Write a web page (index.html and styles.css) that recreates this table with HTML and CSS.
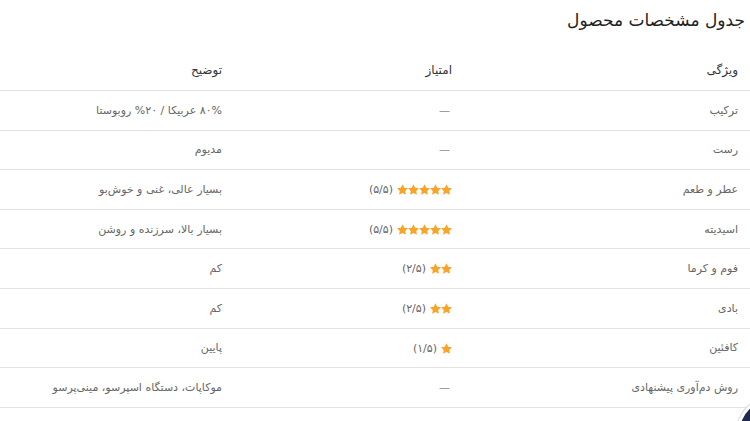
FILE: index.html
```html
<!DOCTYPE html>
<html lang="fa" dir="rtl">
<head>
<meta charset="utf-8">
<link rel="stylesheet" href="styles.css">
</head>
<body>
<svg width="0" height="0" class="defs" aria-hidden="true">
  <defs>
    <symbol id="star" viewBox="1.5 1.3 21 20.5">
      <path d="M12 1.5l3.2 6.6 7.3 1.05-5.3 5.15 1.25 7.25L12 18.1l-6.45 3.45 1.25-7.25L1.5 9.15l7.3-1.05z"/>
    </symbol>
  </defs>
</svg>
<div class="page">
  <h2 class="title">جدول مشخصات محصول</h2>
  <table class="spec">
    <thead>
      <tr><th class="c1">ویژگی</th><th class="c2">امتیاز</th><th class="c3">توضیح</th></tr>
    </thead>
    <tbody>
      <tr><td>ترکیب</td><td><span class="dash">—</span></td><td>۸۰% عربیکا / ۲۰% روبوستا</td></tr>
      <tr><td>رست</td><td><span class="dash">—</span></td><td>مدیوم</td></tr>
      <tr><td>عطر و طعم</td><td><span class="rate"><span class="stars"><svg class="st"><use href="#star"/></svg><svg class="st"><use href="#star"/></svg><svg class="st"><use href="#star"/></svg><svg class="st"><use href="#star"/></svg><svg class="st"><use href="#star"/></svg></span><span class="score">(۵/۵)</span></span></td><td>بسیار عالی، غنی و خوش‌بو</td></tr>
      <tr><td>اسیدیته</td><td><span class="rate"><span class="stars"><svg class="st"><use href="#star"/></svg><svg class="st"><use href="#star"/></svg><svg class="st"><use href="#star"/></svg><svg class="st"><use href="#star"/></svg><svg class="st"><use href="#star"/></svg></span><span class="score">(۵/۵)</span></span></td><td>بسیار بالا، سرزنده و روشن</td></tr>
      <tr><td>فوم و کرما</td><td><span class="rate"><span class="stars"><svg class="st"><use href="#star"/></svg><svg class="st"><use href="#star"/></svg></span><span class="score">(۲/۵)</span></span></td><td>کم</td></tr>
      <tr><td>بادی</td><td><span class="rate"><span class="stars"><svg class="st"><use href="#star"/></svg><svg class="st"><use href="#star"/></svg></span><span class="score">(۲/۵)</span></span></td><td>کم</td></tr>
      <tr><td>کافئین</td><td><span class="rate"><span class="stars"><svg class="st"><use href="#star"/></svg></span><span class="score">(۱/۵)</span></span></td><td>پایین</td></tr>
      <tr><td>روش دم‌آوری پیشنهادی</td><td><span class="dash">—</span></td><td>موکاپات، دستگاه اسپرسو، مینی‌پرسو</td></tr>
    </tbody>
  </table>
</div>
<div class="fab"></div>
</body>
</html>
```
FILE: styles.css
```css
html, body {
  margin: 0;
  padding: 0;
  background: #fff;
  overflow: hidden;
}
body {
  font-family: "DejaVu Sans", "Noto Sans", sans-serif;
  color: #333;
  width: 750px;
  height: 421px;
}
.defs {
  position: absolute;
  width: 0;
  height: 0;
}
.title {
  margin: 0;
  padding: 8px 5px 0 0;
  height: 42px;
  font-size: 17px;
  font-weight: normal;
  color: #222;
  line-height: 24px;
}
.spec {
  width: 750px;
  border-collapse: collapse;
  font-size: 11px;
}
.spec th, .spec td {
  text-align: right;
  padding: 0 12px;
  border-bottom: 1px solid #e2e2e2;
}
.spec th {
  height: 40px;
  font-weight: normal;
  color: #333;
  font-size: 12px;
}
.spec td {
  height: 38.6px;
  color: #666;
}
.c1 { width: 262px; }
.c2 { width: 206px; }
.c3 { width: auto; }
.dash {
  color: #888;
  padding-right: 2px;
}
.rate {
  display: inline-flex;
  align-items: center;
  gap: 4px;
  vertical-align: middle;
}
.stars {
  display: inline-flex;
  color: #f7a428;
}
.st {
  width: 11px;
  height: 11px;
  fill: currentColor;
}
.score {
  color: #666;
}
.fab {
  position: fixed;
  left: 737px;
  top: 397px;
  width: 64px;
  height: 64px;
  border-radius: 50%;
  background: #1e2a4d;
  border: 3px solid #fff;
  box-shadow: 0 0 0 1px #d3d7de;
}
```
